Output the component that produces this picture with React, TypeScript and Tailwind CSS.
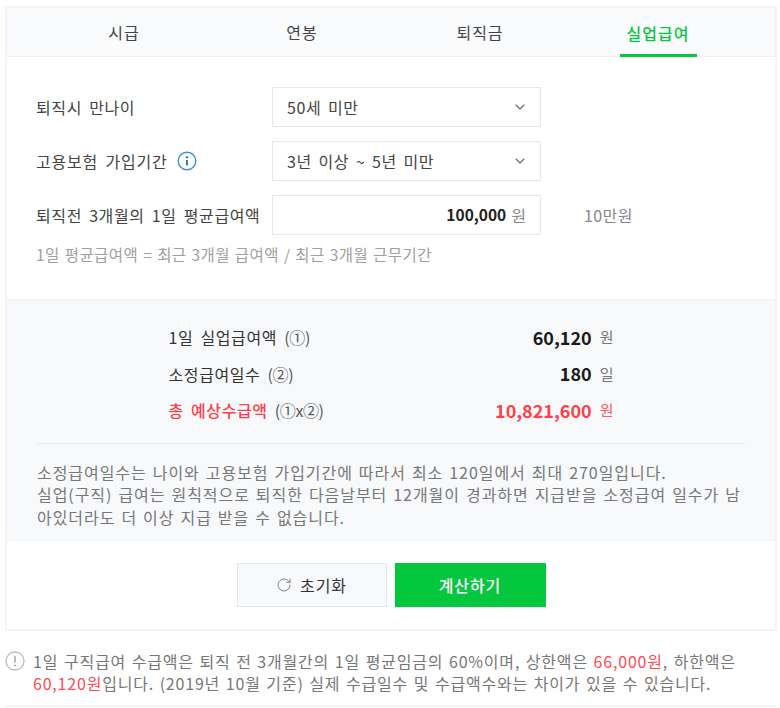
import { ChevronDown, RotateCw } from 'lucide-react';

const font = { fontFamily: '"Noto Sans CJK KR", "Noto Sans", sans-serif' };

function Select({ value }: { value: string }) {
  return (
    <div className="flex h-10 w-[269px] items-center justify-between border border-[#e4e8f0] bg-white pl-[14px] pr-[12px] text-[16px] tracking-[0.6px] text-[#444] [word-spacing:2.5px]">
      <span>{value}</span>
      <ChevronDown className="h-[16px] w-[16px] text-[#666]" strokeWidth={1.6} />
    </div>
  );
}

function ResultRow({ label, mark, value, unit, red }: { label: string; mark: string; value: string; unit: string; red?: boolean }) {
  return (
    <div className="flex h-[36.5px] w-[445px] items-center justify-between">
      <div className={`text-[16px] tracking-[0.6px] [word-spacing:3px] ${red ? 'font-medium text-[#ff3f49]' : 'text-[#333]'}`}>
        {label} <span className="font-normal tracking-[-0.4px] text-[#555]">{mark}</span>
      </div>
      <div className="flex items-center gap-[8px]">
        <span className={`text-[18px] font-bold ${red ? 'text-[#ff3f49]' : 'text-[#1a1a1a]'}`}>{value}</span>
        <span className={`text-[15px] ${red ? 'text-[#ff5a62]' : 'text-[#777]'}`}>{unit}</span>
      </div>
    </div>
  );
}

export default function App() {
  return (
    <div className="h-[708px] w-[780px] overflow-hidden bg-white pl-[5px] pr-[3px] pt-[6px]" style={font}>
      <div className="border-2 border-[#f3f4f7]">
        <div className="flex h-[49px] border-b border-[#eef0f4] bg-[#fafbfd] pl-[28px] text-[16px] tracking-[1px] text-[#444]">
          <div className="flex w-[178px] items-center justify-center">시급</div>
          <div className="flex w-[178px] items-center justify-center">연봉</div>
          <div className="flex w-[178px] items-center justify-center">퇴직금</div>
          <div className="flex w-[178px] justify-center">
            <div className="-mb-px flex w-[77px] items-center justify-center border-b-[3px] border-[#06c73f] pt-[3px] font-medium text-[#06c73f]">
              실업급여
            </div>
          </div>
        </div>

        <div className="px-[29px] pb-[34px] pt-[30px]">
          <div className="flex flex-col gap-[14px]">
            <div className="flex items-center">
              <div className="w-[236px] text-[16px] tracking-[0.6px] text-[#444] [word-spacing:3px]">퇴직시 만나이</div>
              <Select value="50세 미만" />
            </div>
            <div className="flex items-center">
              <div className="flex w-[236px] items-center gap-[9px] text-[16px] tracking-[0.8px] text-[#444] [word-spacing:3px]">
                고용보험 가입기간
                <svg width="20" height="20" viewBox="0 0 20 20" fill="none">
                  <circle cx="10" cy="10" r="8.8" stroke="#3f8fd0" strokeWidth="1.4" />
                  <circle cx="10" cy="6.2" r="1.2" fill="#2f7fc4" />
                  <path d="M10 9v5.4" stroke="#2f7fc4" strokeWidth="2" />
                </svg>
              </div>
              <Select value="3년 이상 ~ 5년 미만" />
            </div>
            <div className="flex items-center">
              <div className="w-[236px] whitespace-nowrap text-[16px] tracking-[0.6px] text-[#444] [word-spacing:3px]">퇴직전 3개월의 1일 평균급여액</div>
              <div className="flex h-10 w-[269px] items-center justify-end gap-[5px] border border-[#e4e8f0] bg-white pr-[14px]">
                <span className="text-[15.5px] font-bold text-[#222]">100,000</span>
                <span className="text-[16px] text-[#888]">원</span>
              </div>
              <div className="ml-[43px] text-[16px] tracking-[0.4px] text-[#888]">10만원</div>
            </div>
          </div>
          <p className="mt-[8px] whitespace-nowrap text-[15.5px] leading-[22px] tracking-[0.45px] text-[#a0a0a0] [word-spacing:1px]">1일 평균급여액 = 최근 3개월 급여액 / 최근 3개월 근무기간</p>
        </div>

        <div className="border-t-2 border-[#f3f4f7] bg-[#f8f9fb] px-[30px] pb-[12px] pt-[18px]">
          <div className="flex flex-col items-center">
            <ResultRow label="1일 실업급여액" mark="(①)" value="60,120" unit="원" />
            <ResultRow label="소정급여일수" mark="(②)" value="180" unit="일" />
            <ResultRow label="총 예상수급액" mark="(①x②)" value="10,821,600" unit="원" red />
          </div>
          <div className="mt-[14px] break-all border-t border-[#e9ebef] pt-[17px] text-[16px] leading-[22.5px] tracking-[0.95px] text-[#777] [word-spacing:1.5px]">
            소정급여일수는 나이와 고용보험 가입기간에 따라서 최소 120일에서 최대 270일입니다.
            <br />
            실업(구직) 급여는 원칙적으로 퇴직한 다음날부터 12개월이 경과하면 지급받을 소정급여 일수가 남아있더라도 더 이상 지급 받을 수 없습니다.
          </div>
        </div>

        <div className="flex justify-center gap-[8px] border-t border-[#f3f4f7] py-[22px]">
          <button className="flex h-[44px] w-[150px] items-center justify-center gap-[8px] border border-[#e3e7f2] bg-[#f8f9fc] text-[16px] tracking-[0.9px] text-[#333]">
            <RotateCw className="h-[16px] w-[16px] text-[#777]" strokeWidth={1.4} />
            초기화
          </button>
          <button className="flex h-[44px] w-[151px] items-center justify-center bg-[#03c83d] text-[16px] font-medium tracking-[0.9px] text-white">계산하기</button>
        </div>
      </div>

      <div className="mt-[19px] flex border-b-2 border-[#f5f5f9] pb-[11px]">
        <svg className="mt-[1px] shrink-0" width="20" height="20" viewBox="0 0 20 20" fill="none">
          <circle cx="10" cy="10" r="9" stroke="#bbb" strokeWidth="1.3" />
          <path d="M10 4.8v7" stroke="#aaa" strokeWidth="1.6" />
          <circle cx="10" cy="14.6" r="1" fill="#aaa" />
        </svg>
        <p className="ml-[8px] text-[16px] leading-[22px] tracking-[0.8px] text-[#777] [word-spacing:1.3px]">
          1일 구직급여 수급액은 퇴직 전 3개월간의 1일 평균임금의 60%이며, 상한액은 <span className="text-[#ff4a55]">66,000원</span>, 하한액은{' '}
          <span className="text-[#ff4a55]">60,120원</span>입니다. (2019년 10월 기준) 실제 수급일수 및 수급액수와는 차이가 있을 수 있습니다.
        </p>
      </div>
    </div>
  );
}
